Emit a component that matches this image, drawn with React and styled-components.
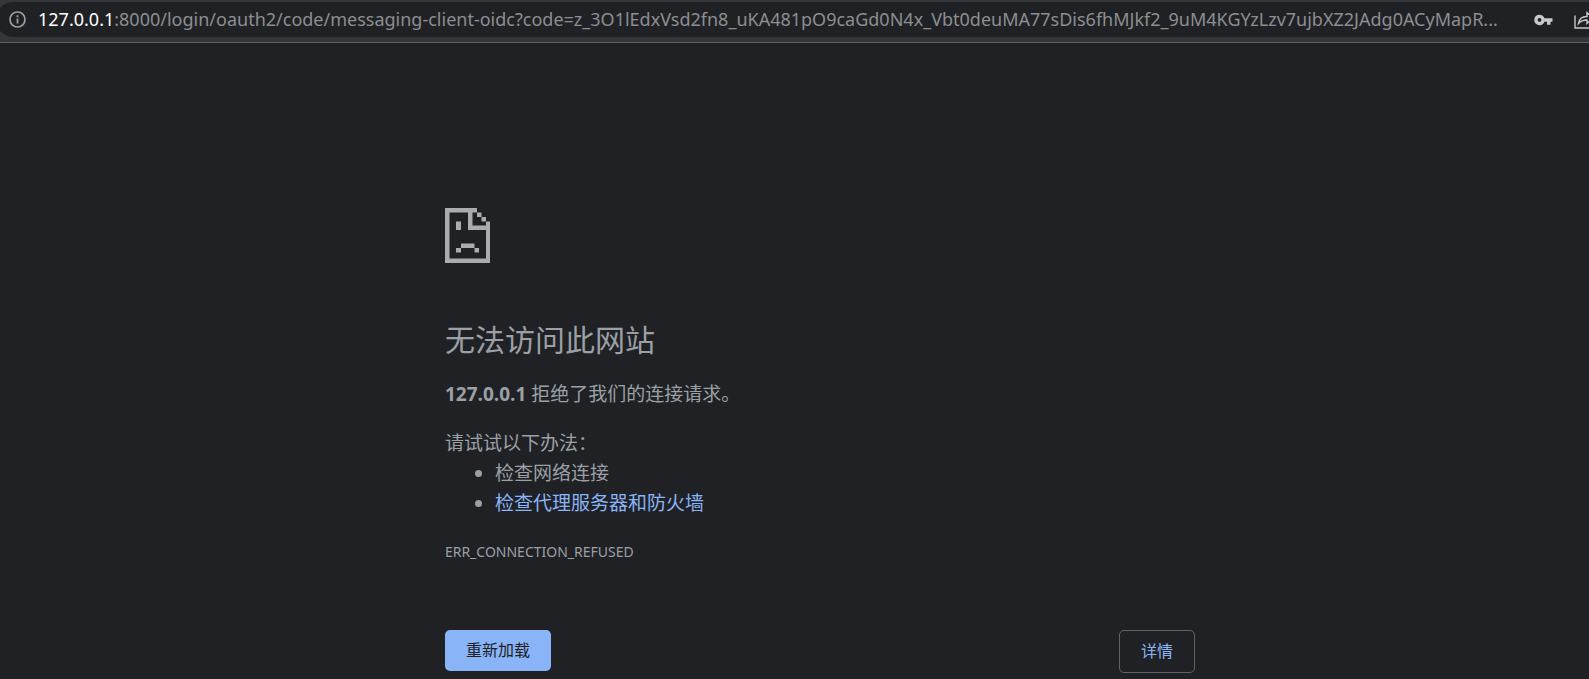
import React, { useState } from "react";
import styled, { createGlobalStyle } from "styled-components";

const GlobalStyle = createGlobalStyle`
  * {
    box-sizing: border-box;
  }

  body {
    margin: 0;
    background: #202124;
    color: #9aa0a6;
    font-family: "Open Sans", "Noto Sans CJK SC", sans-serif;
    font-size: 19px;
    line-height: 30px;
    overflow-x: hidden;
  }
`;

const Toolbar = styled.header`
  padding: 2px 0 5px;
  background: #35363a;
  border-bottom: 1px solid #5f6368;
  overflow: hidden;
`;

const AddressBar = styled.div`
  display: flex;
  align-items: center;
  height: 35px;
  margin: 0 -7px 0 -4px;
  padding-left: 13px;
  background: #202124;
  border-radius: 18px 0 0 18px;
`;

const IconButton = styled.button`
  display: flex;
  flex: none;
  padding: 0;
  border: 0;
  background: none;
  color: ${(props) => props.$color || "#c7c8ca"};
  cursor: pointer;
`;

const Url = styled.div`
  flex: 1;
  min-width: 0;
  padding: 0 0 2px 12px;
  color: #8c8e91;
  font-family: "Noto Sans", sans-serif;
  font-size: 18px;
  white-space: nowrap;
  overflow: hidden;
  text-overflow: ellipsis;
`;

const Host = styled.span`
  color: #fff;
`;

const Actions = styled.div`
  display: flex;
  align-items: center;
  gap: 21px;
  margin-left: 20px;
`;

const Main = styled.main`
  width: 750px;
  max-width: 72%;
  margin-left: 28%;
  padding-top: 165px;
`;

const SadPage = styled.svg`
  display: block;
  width: 45px;
  height: 55px;
  fill: #acacac;
`;

const Title = styled.h1`
  margin: 57px 0 0;
  font-size: 30px;
  font-weight: 400;
  line-height: 40px;
`;

const Paragraph = styled.p`
  margin: ${(props) => props.$top}px 0 0;
`;

const Suggestions = styled.ul`
  margin: 0;
  padding-left: 50px;
`;

const Link = styled.a`
  color: #8ab4f8;
  text-decoration: none;
`;

const ErrorCode = styled.div`
  margin-top: 24px;
  font-family: "Noto Sans", sans-serif;
  font-size: 14px;
  line-height: 20px;
`;

const Buttons = styled.div`
  display: flex;
  align-items: flex-start;
  justify-content: space-between;
  margin-top: 68px;
`;

const Button = styled.button`
  padding: 10px 21px;
  border: 0;
  border-radius: 5px;
  background: #8ab4f8;
  color: #202124;
  font-family: inherit;
  font-size: 16px;
  line-height: 21px;
  cursor: pointer;
`;

const DetailsButton = styled(Button)`
  border: 1px solid #5f6368;
  background: none;
  color: #8ab4f8;
`;

const host = "127.0.0.1";
const path =
  ":8000/login/oauth2/code/messaging-client-oidc?code=z_3O1lEdxVsd2fn8_uKA481pO9caGd0N4x_Vbt0deuMA77sDis6fhMJkf2_9uM4KGYzLzv7ujbXZ2JAdg0ACyMapR...";

const InfoIcon = () => (
  <svg width="17" height="17" viewBox="0 0 17 17" fill="none" stroke="currentColor">
    <circle cx="8.5" cy="8.5" r="7.5" strokeWidth="1.7" />
    <path d="M8.5 7.5v5M8.5 4.2v2" strokeWidth="1.8" />
  </svg>
);

const KeyIcon = () => (
  <svg width="19" height="12" viewBox="0 0 19 12" fill="currentColor">
    <path
      fillRule="evenodd"
      d="M5.5 0.7a5.2 5.2 0 1 0 4.9 7H13v3h3.5v-3h2v-3.500h-8.100A5.200 5.200 0 0 0 5.500 0.700zM5.500 4a1.900 1.900 0 1 1 0 3.800 1.900 1.900 0 0 1 0-3.800z"
    />
  </svg>
);

const ShareIcon = () => (
  <svg width="22" height="20" viewBox="0 0 22 20" fill="none" stroke="currentColor" strokeWidth="1.4">
    <path d="M1 5.500v12.500h15.500v-4" />
    <path d="M4.500 13.500c.5-4.500 3.500-7 8.500-7V2.500l6 5.500-6 5.500V10c-4 0-6.500 1-8.500 3.500z" />
  </svg>
);

const App = () => {
  const [showDetails, setShowDetails] = useState(false);

  return (
    <>
      <GlobalStyle />
      <Toolbar>
        <AddressBar>
          <IconButton aria-label="网站信息" $color="#9aa0a6">
            <InfoIcon />
          </IconButton>
          <Url>
            <Host>{host}</Host>
            {path}
          </Url>
          <Actions>
            <IconButton aria-label="密码">
              <KeyIcon />
            </IconButton>
            <IconButton aria-label="分享">
              <ShareIcon />
            </IconButton>
          </Actions>
        </AddressBar>
      </Toolbar>
      <Main lang="zh-CN">
        <SadPage viewBox="0 0 45 55" aria-hidden="true">
          <path d="M0 0H32V4.500H27.500V17.500H41V13.500H45V55H0zM4.500 4.500V50.500H41V22H23V4.500z" fillRule="evenodd" />
          <path d="M32 4.500h4.500V9H41v4.500h-4.500V9H32z" />
          <path d="M11 13.500h5V22h-5zM16 35.500h13.500V40H34v4.500h-4.500V40H16v4.500h-5V40h5z" />
        </SadPage>
        <Title>无法访问此网站</Title>
        <Paragraph $top={19}>
          <strong>{host}</strong> 拒绝了我们的连接请求。
        </Paragraph>
        <Paragraph $top={19}>请试试以下办法：</Paragraph>
        <Suggestions>
          <li>检查网络连接</li>
          <li>
            <Link href="#buttons">检查代理服务器和防火墙</Link>
          </li>
        </Suggestions>
        <ErrorCode>ERR_CONNECTION_REFUSED</ErrorCode>
        <Buttons id="buttons">
          <Button onClick={() => window.location.reload()}>重新加载</Button>
          <DetailsButton
            aria-expanded={showDetails}
            onClick={() => setShowDetails(!showDetails)}
          >
            详情
          </DetailsButton>
        </Buttons>
      </Main>
    </>
  );
};

export default App;
